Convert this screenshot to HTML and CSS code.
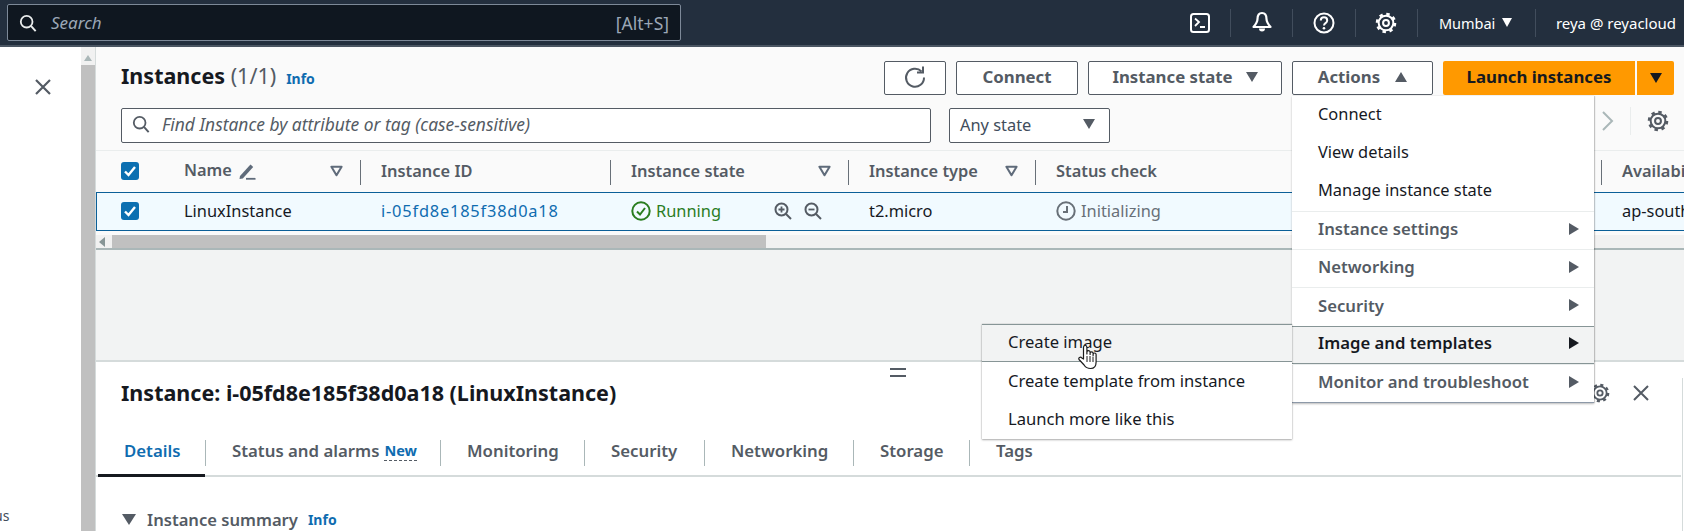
FILE: index.html
```html
<!DOCTYPE html>
<html lang="en">
<head>
    <meta charset="UTF-8">
    <meta name="viewport" content="width=device-width, initial-scale=1.0">
    <title>Instances</title>
    <link rel="stylesheet" href="styles.css">
</head>
<body>
    <svg class="defs" width="0" height="0">
        <symbol id="i-gear" viewBox="0 0 24 24">
            <circle cx="12" cy="12" r="8" fill="none" stroke="currentColor" stroke-width="2.200"/>
            <circle cx="12" cy="12" r="9.800" fill="none" stroke="currentColor" stroke-width="2.800" stroke-dasharray="3.700 4"/>
            <circle cx="12" cy="12" r="3.200" fill="none" stroke="currentColor" stroke-width="2.200"/>
        </symbol>
        <symbol id="i-search" viewBox="0 0 20 20">
            <circle cx="8.500" cy="8.500" r="6.500" fill="none" stroke="currentColor" stroke-width="2"/>
            <path d="M13.500 13.500 18.500 19" fill="none" stroke="currentColor" stroke-width="2.200"/>
        </symbol>
        <symbol id="i-check" viewBox="0 0 18 18">
            <rect width="18" height="18" rx="3" fill="#0b6fb1"/>
            <path d="M4 9.500 7.500 13 14 5" fill="none" stroke="#fff" stroke-width="2.400"/>
        </symbol>
        <symbol id="i-filter" viewBox="0 0 14 12">
            <path d="M1.500 1.500h11L7 10.500z" fill="none" stroke="#5f6b7a" stroke-width="2.200" stroke-linejoin="round"/>
        </symbol>
    </svg>

    <header class="topbar">
        <div class="global-search">
            <svg class="global-search-icon"><use href="#i-search"/></svg>
            <span class="global-search-text">Search</span>
            <span class="global-search-key">[Alt+S]</span>
        </div>
        <nav class="topnav">
            <span class="topnav-icon">
                <svg width="22" height="22" viewBox="0 0 22 22"><rect x="2" y="2" width="18" height="18" rx="2.500" fill="none" stroke="#fff" stroke-width="2"/><path d="M6 6.500 10 10l-4 4M11 15h5" fill="none" stroke="#fff" stroke-width="1.800"/></svg>
            </span>
            <span class="topnav-icon">
                <svg width="22" height="24" viewBox="0 0 22 24"><path d="M11 2c-3.500 0-4.500 3-4.500 6 0 3-1.500 5-4 8h17c-2.500-3-4-5-4-8 0-3-1-6-4.500-6z" fill="none" stroke="#fff" stroke-width="2.200" stroke-linejoin="round"/><path d="M8 17.500a3 3 0 0 0 6 0z" fill="#fff"/></svg>
            </span>
            <span class="topnav-icon">
                <svg width="22" height="22" viewBox="0 0 22 22"><circle cx="11" cy="11" r="9.500" fill="none" stroke="#fff" stroke-width="2"/><path d="M7.800 8.500c0-4.200 6.400-4.200 6.400 0 0 2.700-3.200 2.500-3.200 5" fill="none" stroke="#fff" stroke-width="2"/><circle cx="11" cy="16.300" r="1.300" fill="#fff"/></svg>
            </span>
            <span class="topnav-icon topnav-gear">
                <svg width="22" height="22"><use href="#i-gear"/></svg>
            </span>
            <span class="topnav-region">Mumbai <i class="caret caret-down caret-white"></i></span>
            <span class="topnav-user">reya @ reyacloud</span>
        </nav>
    </header>

    <div class="workspace">
        <aside class="sidepanel">
            <svg class="side-close" width="18" height="18" viewBox="0 0 18 18"><path d="M2 2l14 14M16 2 2 16" stroke="#545b64" stroke-width="2.200"/></svg>
            <span class="side-clip">us</span>
        </aside>
        <div class="vscroll">
            <i class="caret caret-up caret-scroll"></i>
            <div class="vscroll-thumb"></div>
        </div>

        <main class="content">
            <section class="instances">
                <div class="instances-head">
                    <h1 class="instances-title">Instances <span class="count">(1/1)</span></h1>
                    <a class="info">Info</a>
                    <div class="actions">
                        <button class="btn btn-icon">
                            <svg width="24" height="24" viewBox="0 0 24 24"><path d="M18.500 6.500a9 9 0 1 0 2.500 6" fill="none" stroke="#545b64" stroke-width="2"/><path d="M14 7.500h6v-6" fill="none" stroke="#545b64" stroke-width="2"/></svg>
                        </button>
                        <button class="btn btn-connect">Connect</button>
                        <button class="btn btn-state">Instance state <i class="caret caret-down"></i></button>
                        <div class="actions-wrap">
                            <button class="btn btn-actions">Actions <i class="caret caret-up"></i></button>
                            <ul class="menu">
                                <li class="menu-item">Connect</li>
                                <li class="menu-item">View details</li>
                                <li class="menu-item">Manage instance state</li>
                                <li class="menu-item menu-group">Instance settings <i class="caret caret-right"></i></li>
                                <li class="menu-item menu-group">Networking <i class="caret caret-right"></i></li>
                                <li class="menu-item menu-group">Security <i class="caret caret-right"></i></li>
                                <li class="menu-item menu-group menu-open">Image and templates <i class="caret caret-right caret-dark"></i>
                                    <ul class="submenu">
                                        <li class="menu-item submenu-hover">Create image
                                            <svg class="hand" width="22" height="26" viewBox="0 0 22 26"><path d="M6.500 15V3.200a1.700 1.700 0 0 1 3.400 0V10V8.300a1.600 1.600 0 0 1 3.200 0V10.500V9.300a1.500 1.500 0 0 1 3 0V11.500V10.500a1.500 1.500 0 0 1 3 0V18c0 4-2 6.500-5.500 6.500-3.500 0-5-1-6.500-3.500L2 15.500c-1-1.800 1.500-3.200 2.800-1.500z" fill="#fff" stroke="#1b1b1b" stroke-width="1.200" stroke-linejoin="round"/><path d="M10 12v6M13 12v6M16 12.500V18" stroke="#1b1b1b" stroke-width="1"/></svg>
                                        </li>
                                        <li class="menu-item">Create template from instance</li>
                                        <li class="menu-item">Launch more like this</li>
                                    </ul>
                                </li>
                                <li class="menu-item menu-group">Monitor and troubleshoot <i class="caret caret-right"></i></li>
                            </ul>
                        </div>
                        <div class="launch">
                            <button class="launch-main">Launch instances</button>
                            <button class="launch-more"><i class="caret caret-down caret-dark"></i></button>
                        </div>
                    </div>
                </div>

                <div class="filters">
                    <div class="find">
                        <svg class="find-icon"><use href="#i-search"/></svg>
                        <span>Find Instance by attribute or tag (case-sensitive)</span>
                    </div>
                    <div class="select">Any state <i class="caret caret-down"></i></div>
                    <div class="pager">
                        <svg width="14" height="22" viewBox="0 0 14 22"><path d="M2 2l9 9-9 9" fill="none" stroke="#aab7b8" stroke-width="2"/></svg>
                        <span class="pager-gear"><svg width="22" height="22"><use href="#i-gear"/></svg></span>
                    </div>
                </div>

                <div class="tr thead">
                    <div class="cell cell-check"><svg class="check"><use href="#i-check"/></svg></div>
                    <div class="cell">
                        <span class="name-label">Name</span>
                        <svg class="pencil" width="18" height="18" viewBox="0 0 18 18"><path d="M2 14 12.500 2.500l2.700 2.500L4.800 16.500 1.500 17z" fill="#5f6b7a"/><path d="M8 16.800h9.500" stroke="#5f6b7a" stroke-width="1.800"/></svg>
                        <svg class="filter"><use href="#i-filter"/></svg>
                    </div>
                    <div class="cell">Instance ID</div>
                    <div class="cell">Instance state <svg class="filter"><use href="#i-filter"/></svg></div>
                    <div class="cell">Instance type <svg class="filter"><use href="#i-filter"/></svg></div>
                    <div class="cell">Status check</div>
                    <div class="cell"></div>
                    <div class="cell">Availability Zone</div>
                </div>
                <div class="tr tbody">
                    <div class="cell cell-check"><svg class="check"><use href="#i-check"/></svg></div>
                    <div class="cell">LinuxInstance</div>
                    <div class="cell"><a class="link">i-05fd8e185f38d0a18</a></div>
                    <div class="cell cell-state">
                        <svg width="20" height="20" viewBox="0 0 20 20"><circle cx="10" cy="10" r="8.700" fill="none" stroke="#2a7d1f" stroke-width="2"/><path d="M6 10.500 9 13.500 14 7" fill="none" stroke="#2a7d1f" stroke-width="2"/></svg>
                        <span class="running">Running</span>
                        <svg class="zoom zoom-in" width="18" height="18" viewBox="0 0 18 18"><circle cx="7.500" cy="7.500" r="6" fill="none" stroke="#545b64" stroke-width="2"/><path d="M12 12l5 5" stroke="#545b64" stroke-width="2"/><path d="M4.500 7.500h6M7.500 4.500v6" stroke="#545b64" stroke-width="1.800"/></svg>
                        <svg class="zoom zoom-out" width="18" height="18" viewBox="0 0 18 18"><circle cx="7.500" cy="7.500" r="6" fill="none" stroke="#545b64" stroke-width="2"/><path d="M12 12l5 5" stroke="#545b64" stroke-width="2"/><path d="M4.500 7.500h6" stroke="#545b64" stroke-width="1.800"/></svg>
                    </div>
                    <div class="cell">t2.micro</div>
                    <div class="cell cell-status">
                        <svg width="20" height="20" viewBox="0 0 20 20"><circle cx="10" cy="10" r="8.700" fill="none" stroke="#687078" stroke-width="2"/><path d="M11 5v6H7" fill="none" stroke="#687078" stroke-width="2"/></svg>
                        <span class="initializing">Initializing</span>
                    </div>
                    <div class="cell"></div>
                    <div class="cell">ap-south-1a</div>
                </div>
                <div class="hscroll">
                    <i class="caret caret-left caret-scroll"></i>
                    <div class="hscroll-thumb"></div>
                </div>
            </section>

            <div class="splitter"></div>

            <section class="detail">
                <span class="drag-handle"></span>
                <div class="detail-head">
                    <h2 class="detail-title">Instance: i-05fd8e185f38d0a18 (LinuxInstance)</h2>
                    <div class="detail-tools">
                        <svg width="20" height="20"><use href="#i-gear"/></svg>
                        <svg class="detail-close" width="18" height="18" viewBox="0 0 18 18"><path d="M2 2l14 14M16 2 2 16" stroke="#545b64" stroke-width="2"/></svg>
                    </div>
                </div>
                <div class="tabs">
                    <span class="tab tab-active">Details</span>
                    <span class="tab tab-status">Status and alarms <em class="tab-new">New</em></span>
                    <span class="tab tab-monitoring">Monitoring</span>
                    <span class="tab tab-security">Security</span>
                    <span class="tab tab-networking">Networking</span>
                    <span class="tab tab-storage">Storage</span>
                    <span class="tab tab-tags">Tags</span>
                </div>
                <div class="summary">
                    <i class="caret caret-down"></i>
                    <span class="summary-title">Instance summary</span>
                    <a class="info">Info</a>
                </div>
            </section>
        </main>
    </div>
</body>
</html>
```

FILE: styles.css
```css
* {
    box-sizing: border-box;
}
html, body {
    height: 100%;
}
body {
    margin: 0;
    overflow: hidden;
    font-family: "Noto Sans", Arial, sans-serif;
    font-size: 16.400px;
    color: #16191f;
    background-color: #fff;
}
ul {
    list-style: none;
    margin: 0;
    padding: 0;
}
button {
    font-family: inherit;
}
.defs {
    position: absolute;
}

/* carets */
.caret {
    display: inline-block;
    flex: none;
    width: 0;
    height: 0;
    border-style: solid;
    border-color: transparent;
}
.caret-down {
    border-width: 10px 6.500px 0;
    border-top-color: #545b64;
}
.caret-up {
    border-width: 0 6.500px 10px;
    border-bottom-color: #545b64;
}
.caret-right {
    border-width: 6.500px 0 6.500px 10px;
    border-left-color: #545b64;
}
.caret-left {
    border-width: 5px 6px 5px 0;
    border-right-color: #879596;
}
.caret-down.caret-dark {
    border-top-color: #16191f;
}
.caret-right.caret-dark {
    border-left-color: #16191f;
}
.caret-down.caret-white {
    border-width: 9px 5px 0;
    border-top-color: #fff;
}
.caret-up.caret-scroll {
    border-width: 0 4px 6px;
    border-bottom-color: #aab7b8;
}

/* top bar */
.topbar {
    display: flex;
    align-items: center;
    height: 47px;
    padding-left: 7px;
    overflow: hidden;
    color: #fff;
    background-color: #232f3e;
    border-bottom: 2px solid #4a5562;
}
.global-search {
    display: flex;
    flex: none;
    align-items: center;
    width: 674px;
    height: 37px;
    padding: 0 11px;
    background-color: #0f1720;
    border: 1px solid #7d8998;
    border-radius: 2px;
}
.global-search-icon {
    width: 18px;
    height: 20px;
    color: #eaeded;
}
.global-search-text {
    margin-left: 14px;
    font-size: 17px;
    font-style: italic;
    color: #9ba7b6;
}
.global-search-key {
    margin-left: auto;
    font-size: 17.500px;
    color: #9ba7b6;
}
.topnav {
    display: flex;
    flex: none;
    align-items: center;
    height: 28px;
    margin-left: 489px;
    white-space: nowrap;
}
.topnav-icon {
    display: flex;
    flex: none;
    justify-content: center;
    align-items: center;
    width: 62.300px;
    height: 28px;
    border-left: 1px solid #414d5c;
}
.topnav-icon:first-child {
    width: 60px;
    border-left: 0;
}
.topnav-gear {
    color: #fff;
}
.topnav-region {
    display: flex;
    flex: none;
    align-items: center;
    gap: 7px;
    width: 118px;
    height: 28px;
    padding-left: 21px;
    font-size: 14.500px;
    border-left: 1px solid #414d5c;
}
.topnav-user {
    flex: none;
    height: 28px;
    line-height: 28px;
    padding-left: 20px;
    font-size: 15px;
    border-left: 1px solid #414d5c;
}

/* left strip */
.workspace {
    display: flex;
    height: 484px;
}
.sidepanel {
    display: flex;
    flex-direction: column;
    width: 81px;
    padding: 31px 0 0 34px;
}
.side-clip {
    margin: auto 0 6px -34px;
    text-indent: -6px;
    font-size: 14px;
    color: #414d5c;
}
.vscroll {
    display: flex;
    flex-direction: column;
    align-items: center;
    width: 14px;
    padding-top: 8px;
    background-color: #f1f1f1;
}
.vscroll-thumb {
    width: 100%;
    flex: 1;
    margin-top: 4px;
    background-color: #c0c0c0;
}

/* instance list */
.content {
    display: flex;
    flex-direction: column;
    flex: 1;
    min-width: 0;
    border-left: 1px solid #d5dbdb;
}
.instances {
    background-color: #fafafa;
}
.instances-head {
    display: flex;
    align-items: center;
    height: 48px;
    margin-top: 7px;
    padding-left: 25px;
}
.instances-title {
    margin: 0 0 6px;
    font-size: 21.500px;
    font-weight: 700;
}
.count {
    font-weight: 400;
    color: #545b64;
}
.info {
    margin-left: 10px;
    font-size: 14px;
    font-weight: 700;
    color: #0f6cb0;
}
.actions {
    display: flex;
    gap: 10px;
    margin-left: auto;
    padding-right: 10px;
}
.btn {
    display: flex;
    justify-content: center;
    align-items: center;
    height: 34px;
    padding: 0 0 3px;
    font-size: 16.800px;
    font-weight: 700;
    color: #545b64;
    background-color: #fff;
    border: 1px solid #545b64;
    border-radius: 2px;
}
.btn-icon {
    width: 62px;
}
.btn-connect {
    width: 122px;
}
.btn-state {
    gap: 13px;
    width: 194px;
}
.btn-actions {
    gap: 15px;
    width: 141px;
}
.actions-wrap {
    position: relative;
}
.launch {
    display: flex;
    gap: 2px;
    height: 34px;
}
.launch-main, .launch-more {
    padding: 0 0 3px;
    font-size: 16.800px;
    font-weight: 700;
    color: #16191f;
    background-color: #ff9900;
    border: 0;
}
.launch-main {
    width: 192px;
    border-radius: 2px 0 0 2px;
}
.launch-more {
    width: 37px;
    border-radius: 0 2px 2px 0;
}

/* actions menu */
.menu {
    position: absolute;
    top: 35px;
    left: 0;
    z-index: 5;
    width: 302px;
    background-color: #fff;
    border-bottom: 1px solid #8d99a8;
    box-shadow: 0 1px 2px rgba(0,0,0,0.25), 1px 0 1px rgba(0,0,0,0.15);
}
.menu-item {
    position: relative;
    display: flex;
    justify-content: space-between;
    align-items: center;
    height: 38.300px;
    padding: 0 15px 4px 26px;
    color: #16191f;
}
.menu-group {
    font-size: 16.700px;
    font-weight: 600;
    color: #545b64;
    border-top: 1px solid #eaeded;
}
.menu-open {
    font-weight: 600;
    color: #16191f;
    background-color: #f2f3f3;
    border-top: 1px solid #879596;
    border-bottom: 1px solid #879596;
}
.submenu {
    position: absolute;
    top: -3px;
    right: 100%;
    width: 310px;
    font-size: 16.600px;
    font-weight: 400;
    background-color: #fff;
    box-shadow: 0 1px 2px rgba(0,0,0,0.3), 0 0 1px rgba(0,0,0,0.3);
}
.submenu .menu-item {
    padding-bottom: 2px;
}
.submenu-hover {
    background-color: #f2f3f3;
    border-top: 1px solid #879596;
    border-bottom: 1px solid #879596;
}
.hand {
    position: absolute;
    top: 19px;
    left: 95px;
}

/* filter row */
.filters {
    display: flex;
    align-items: center;
    gap: 18px;
    height: 35px;
    margin-top: 6px;
    padding-left: 25px;
}
.find {
    display: flex;
    align-items: center;
    width: 810px;
    height: 35px;
    padding: 0 0 3px 10px;
    font-size: 17.400px;
    font-style: italic;
    color: #545b64;
    background-color: #fff;
    border: 1px solid #545b64;
    border-radius: 2px;
}
.find-icon {
    width: 18px;
    height: 20px;
    margin-right: 12px;
    color: #545b64;
}
.select {
    display: flex;
    justify-content: space-between;
    align-items: center;
    width: 161px;
    height: 35px;
    padding: 0 14px 3px 10px;
    color: #414d5c;
    background-color: #fff;
    border: 1px solid #545b64;
    border-radius: 2px;
}
.pager {
    display: flex;
    align-items: center;
    margin: -10px 0 0 auto;
    padding-right: 15px;
}
.pager-gear {
    display: flex;
    align-items: center;
    height: 28px;
    margin-left: 15px;
    padding-left: 16px;
    color: #545b64;
    border-left: 1px solid #eaeded;
}

/* table */
.tr {
    display: grid;
    grid-template-columns: 67px 197px 250px 238px 187px 257px 309px 1fr;
    overflow: hidden;
}
.thead {
    height: 42px;
    margin-top: 7px;
    font-weight: 600;
    color: #545b64;
    background-color: #fafafa;
    border-top: 1px solid #eaeded;
}
.tbody {
    height: 39px;
    background-color: #f1faff;
    box-shadow: inset 1px 0 #0b5f98, inset 0 1px #0b5f98, inset 0 -1px #0b5f98;
}
.cell {
    display: flex;
    align-items: center;
    min-width: 0;
    padding: 0 0 2px 21px;
    white-space: nowrap;
}
.thead .cell {
    position: relative;
}
.thead .cell:nth-child(n+3)::before {
    content: "";
    position: absolute;
    top: 9px;
    bottom: 7px;
    left: 0;
    border-left: 1px solid #687078;
}
.cell-check {
    padding-left: 25px;
}
.check {
    width: 18px;
    height: 18px;
}
.name-label {
    margin-top: -3px;
}
.pencil {
    margin-left: 6px;
}
.filter {
    width: 13px;
    height: 12px;
    margin-left: auto;
    margin-right: 17px;
}
.link {
    letter-spacing: 0.800px;
    color: #0f6cb0;
}
.cell-state {
    gap: 5px;
}
.running {
    color: #2a7d1f;
}
.zoom-in {
    margin-left: auto;
    margin-right: 7px;
}
.zoom-out {
    margin-right: 26px;
}
.cell-status {
    gap: 5px;
}
.initializing {
    color: #687078;
}
.hscroll {
    display: flex;
    align-items: center;
    height: 15px;
    margin-top: 4px;
    padding-left: 3px;
    gap: 7px;
    background-color: #f1f1f1;
    border-bottom: 2px solid #aab7b8;
}
.hscroll-thumb {
    width: 654px;
    height: 13px;
    background-color: #c0c0c0;
}

/* splitter area */
.splitter {
    flex: 1;
    background-color: #f2f3f3;
}

/* detail panel */
.detail {
    position: relative;
    height: 171px;
    padding-top: 11px;
    background-color: #fff;
    border-top: 2px solid #d5dbdb;
}
.detail::after {
    content: "";
    position: absolute;
    top: 16px;
    right: 1px;
    bottom: 0;
    border-left: 1px solid #d5dbdb;
}
.drag-handle {
    position: absolute;
    top: 6px;
    left: 794px;
    width: 16px;
    height: 9px;
    border-top: 2px solid #545b64;
    border-bottom: 2px solid #545b64;
}
.detail-head {
    display: flex;
    align-items: center;
    height: 40px;
    padding: 0 34px 0 25px;
}
.detail-title {
    margin: 0 0 2px;
    font-size: 21.500px;
    font-weight: 700;
}
.detail-tools {
    display: flex;
    align-items: center;
    margin-left: auto;
    color: #545b64;
}
.detail-close {
    margin-left: 22px;
}
.tabs {
    display: flex;
    height: 37px;
    margin-top: 27px;
    margin-right: 3px;
    padding-left: 2px;
    border-bottom: 2px solid #d5dbdb;
}
.tab {
    position: relative;
    display: flex;
    flex: none;
    align-items: center;
    gap: 5px;
    height: 26px;
    padding: 0 0 5px 26px;
    font-size: 16.800px;
    font-weight: 600;
    color: #545b64;
    border-right: 1px solid #aab7b8;
}
.tab-active {
    width: 107px;
    height: 37px;
    padding-bottom: 13px;
    color: #0f6cb0;
    border-right: 0;
    border-bottom: 3px solid #16191f;
}
.tab-status {
    width: 236px;
    border-left: 1px solid #aab7b8;
}
.tab-monitoring {
    width: 144px;
}
.tab-security {
    width: 120px;
}
.tab-networking {
    width: 149px;
}
.tab-storage {
    width: 116px;
}
.tab-tags {
    border-right: 0;
}
.tab-new {
    font-style: normal;
    font-size: 14.500px;
    font-weight: 700;
    color: #0f6cb0;
    border-bottom: 1px dashed #545b64;
}
.summary {
    display: flex;
    align-items: center;
    height: 30px;
    margin-top: 28px;
    padding: 0 0 2px 26px;
}
.summary .caret {
    border-width: 11px 7px 0;
}
.summary-title {
    margin-left: 11px;
    font-size: 16.600px;
    font-weight: 600;
    color: #545b64;
}
```
